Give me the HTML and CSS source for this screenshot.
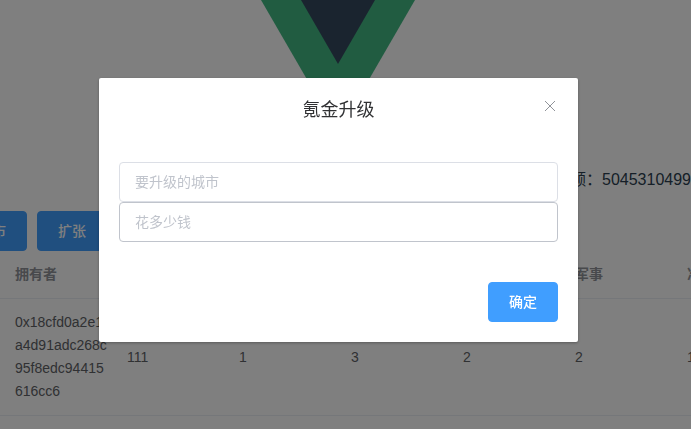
FILE: index.html
```html
<!DOCTYPE html>
<html lang="zh-CN">
<head>
<meta charset="utf-8">
<meta name="viewport" content="width=device-width, initial-scale=1">
<title>氪金升级</title>
<link rel="stylesheet" href="styles.css">
</head>
<body>
<main class="page">
  <div class="logo">
    <svg width="154" height="133" viewBox="0 0 154 133" aria-hidden="true">
      <path fill="#42b983" d="M0 0H154L77 133Z"/>
      <path fill="#35495e" d="M40 0H114L77 64Z"/>
    </svg>
  </div>
  <p class="balance">额：5045310499</p>
  <div class="actions">
    <button class="btn" type="button">城市</button>
    <button class="btn" type="button">扩张</button>
  </div>
  <table class="table">
    <thead>
      <tr><th>拥有者</th><th></th><th></th><th></th><th></th><th>军事</th><th>准</th></tr>
    </thead>
    <tbody>
      <tr><td>0x18cfd0a2e1a4d91adc268c95f8edc94415616cc6</td><td>111</td><td>1</td><td>3</td><td>2</td><td>2</td><td>1</td></tr>
    </tbody>
  </table>
</main>
<div class="overlay">
  <form class="dialog" role="dialog" aria-labelledby="dialog-title">
    <header class="dialog-header">
      <h2 class="dialog-title" id="dialog-title">氪金升级</h2>
      <button class="close" type="button" aria-label="关闭">
        <svg width="12" height="12" viewBox="0 0 12 12" aria-hidden="true">
          <path d="M1 1L11 11M11 1L1 11" fill="none" stroke="#909399"/>
        </svg>
      </button>
    </header>
    <div class="dialog-body">
      <input class="field" type="text" placeholder="要升级的城市" aria-label="要升级的城市">
      <input class="field field-active" type="text" placeholder="花多少钱" aria-label="花多少钱">
    </div>
    <footer class="dialog-footer">
      <button class="btn" type="button">确定</button>
    </footer>
  </form>
</div>
</body>
</html>
```
FILE: styles.css
```css
* {
  box-sizing: border-box;
}

body {
  margin: 0;
  min-height: 100vh;
  overflow: hidden;
  background: #fff;
  color: #2c3e50;
  font-family: "Liberation Sans", "Noto Sans CJK SC", sans-serif;
}

button,
input {
  font: inherit;
}

.page {
  overflow: hidden;
}

.logo {
  display: flex;
  justify-content: center;
  padding-right: 15px;
}

.logo svg {
  display: block;
}

.balance {
  margin: 35px 0 19px;
  font-size: 16px;
  line-height: 24px;
  text-align: right;
  white-space: nowrap;
}

.actions {
  display: flex;
  gap: 10px;
  margin-left: -43px;
}

.btn {
  height: 40px;
  padding: 0 20px;
  border: 1px solid #409eff;
  border-radius: 4px;
  background: #409eff;
  color: #fff;
  font-size: 14px;
  font-weight: 500;
  line-height: 20px;
  cursor: pointer;
}

.table {
  width: 789px;
  table-layout: fixed;
  border-collapse: separate;
  border-spacing: 0;
  color: #606266;
  font-size: 14px;
  line-height: 23px;
}

.table th,
.table td {
  width: 112px;
  padding: 12px 10px;
  border-bottom: 1px solid #ebeef5;
  text-align: left;
  vertical-align: middle;
  word-break: break-all;
}

.table th:first-child,
.table td:first-child {
  width: 117px;
  padding-left: 15px;
}

.table th {
  height: 48px;
  color: #909399;
}

.overlay {
  position: fixed;
  inset: 0;
  padding: 78px 14px 0 0;
  background: rgba(0, 0, 0, 0.5);
}

.dialog {
  width: 90%;
  max-width: 479px;
  margin: 0 auto;
  border-radius: 2px;
  background: #fff;
  box-shadow: 0 1px 3px rgba(0, 0, 0, 0.3);
}

.dialog-header {
  display: grid;
  grid-template-columns: 16px 1fr 16px;
  align-items: center;
  padding: 20px 20px 10px;
}

.dialog-title {
  grid-column: 2;
  margin: 0;
  color: #303133;
  font-size: 18px;
  font-weight: 400;
  line-height: 24px;
  text-align: center;
}

.close {
  display: flex;
  align-self: start;
  align-items: center;
  justify-content: center;
  height: 16px;
  padding: 0;
  border: 0;
  background: none;
  cursor: pointer;
}

.dialog-body {
  padding: 30px 20px;
}

.field {
  display: block;
  width: 100%;
  height: 40px;
  padding: 0 15px;
  border: 1px solid #dcdfe6;
  border-radius: 4px;
  background: #fff;
  color: #606266;
  font-size: 14px;
}

.field-active {
  border-color: #c0c4cc;
}

.field::placeholder {
  color: #c0c4cc;
}

.dialog-footer {
  padding: 10px 20px 20px;
  text-align: right;
}

.dialog-footer .btn {
  display: block;
  margin-left: auto;
}
```
